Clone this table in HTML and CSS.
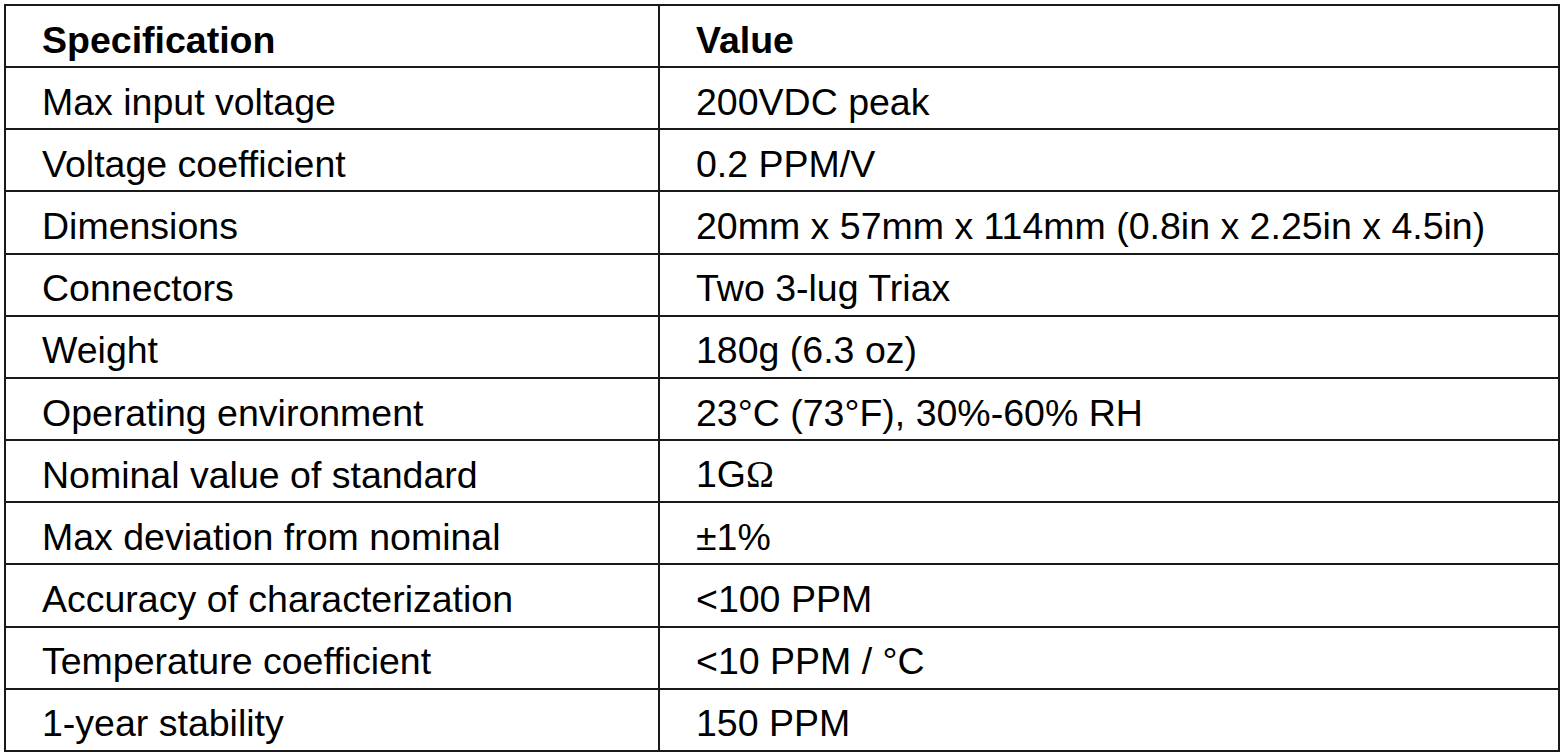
FILE: index.html
```html
<!DOCTYPE html>
<html>
<head>
<meta charset="utf-8">
<link rel="stylesheet" href="styles.css">
</head>
<body>
<table class="spec">
  <colgroup><col class="c1"><col class="c2"></colgroup>
  <tr class="head"><td>Specification</td><td>Value</td></tr>
  <tr><td>Max input voltage</td><td>200VDC peak</td></tr>
  <tr><td>Voltage coefficient</td><td>0.2 PPM/V</td></tr>
  <tr><td>Dimensions</td><td>20mm x 57mm x 114mm (0.8in x 2.25in x 4.5in)</td></tr>
  <tr><td>Connectors</td><td>Two 3-lug Triax</td></tr>
  <tr><td>Weight</td><td>180g (6.3 oz)</td></tr>
  <tr><td>Operating environment</td><td>23°C (73°F), 30%-60% RH</td></tr>
  <tr><td>Nominal value of standard</td><td>1G<span class="ohm">Ω</span></td></tr>
  <tr><td>Max deviation from nominal</td><td>±1%</td></tr>
  <tr><td>Accuracy of characterization</td><td>&lt;100 PPM</td></tr>
  <tr><td>Temperature coefficient</td><td>&lt;10 PPM / °C</td></tr>
  <tr><td>1-year stability</td><td>150 PPM</td></tr>
</table>
</body>
</html>
```
FILE: styles.css
```css
html, body {
  margin: 0;
  padding: 0;
  background: #fff;
}
body {
  padding: 4px 0 0 4px;
  font-family: "Liberation Sans", Arial, sans-serif;
  color: #000;
}
.spec {
  border-collapse: collapse;
  width: 1554px;
  table-layout: fixed;
}
.c1 { width: 654px; }
.c2 { width: 900px; }
.spec td {
  border: 2px solid #1a1a1a;
  height: 60px;
  padding: 7px 8px 0 36px;
  font-size: 37.5px;
  line-height: 42px;
  vertical-align: middle;
  white-space: nowrap;
  box-sizing: border-box;
}
.spec tr {
  height: 62.17px;
}
.head td {
  font-weight: bold;
}
.ohm {
  font-family: "Liberation Serif", "Times New Roman", serif;
}
```
